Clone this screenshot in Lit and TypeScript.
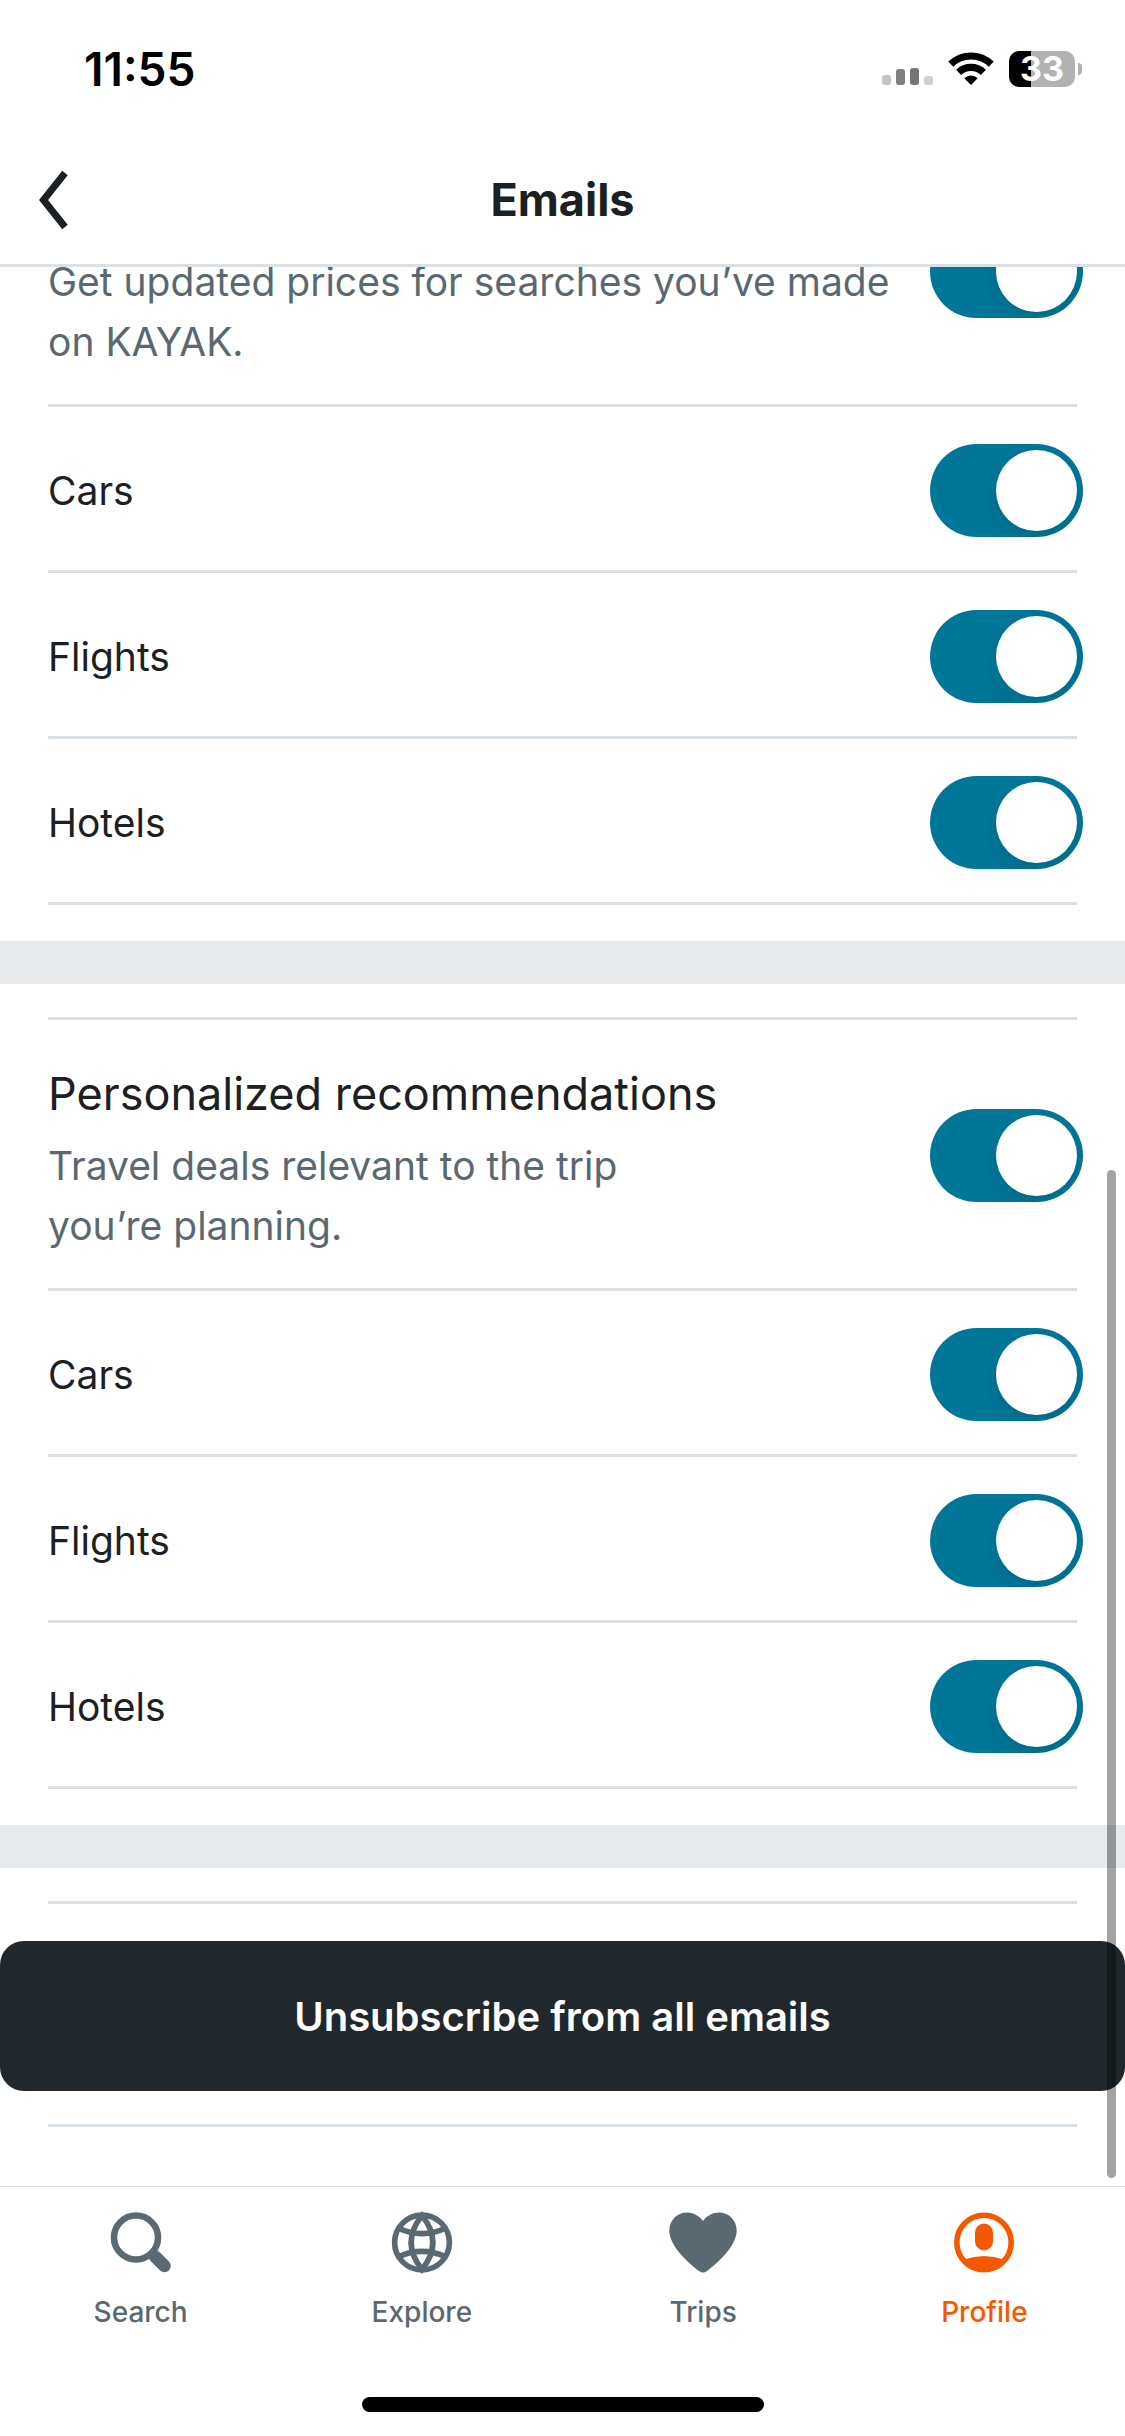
import { LitElement, html, css, svg, nothing } from "lit";
import { customElement, property } from "lit/decorators.js";

@customElement("toggle-row")
class ToggleRow extends LitElement {
  @property() heading = "";
  @property() detail = "";
  @property() label = "";

  static styles = css`
    :host {
      display: block;
      border-bottom: 3px solid #dae1e6;
    }
    .row {
      display: flex;
      align-items: center;
      justify-content: space-between;
      gap: 24px;
      box-sizing: border-box;
      min-height: 163px;
      padding-top: 4px;
      margin-right: -6px;
    }
    .tall {
      min-height: 268px;
      padding-top: 2px;
    }
    .text {
      flex: 1;
      min-width: 0;
    }
    .tall .text {
      align-self: flex-end;
      padding-bottom: 32px;
    }
    .heading {
      display: block;
      font-size: 45px;
      line-height: 60px;
      padding-bottom: 12px;
    }
    .detail {
      display: block;
      color: #5a6872;
      font-size: 39px;
      line-height: 60px;
      white-space: pre-line;
    }
    .name {
      font-size: 39px;
      line-height: 60px;
    }
    .switch {
      appearance: none;
      flex: none;
      display: grid;
      justify-items: start;
      align-items: center;
      box-sizing: border-box;
      width: 153px;
      height: 93px;
      margin: 0;
      padding: 6px;
      border-radius: 47px;
      background: #c3ccd2;
      overflow: hidden;
    }
    .switch:checked {
      justify-items: end;
      background: #007799;
    }
    .switch::before {
      content: "";
      width: 81px;
      height: 81px;
      border-radius: 50%;
      background: #fff;
      box-shadow: 0 9px 24px rgba(0, 0, 0, 0.12);
    }
  `;

  render() {
    const tall = this.detail !== "";
    return html`
      <div class="row ${tall ? "tall" : ""}">
        <label class="text" for="toggle">
          ${this.heading ? html`<span class="heading">${this.heading}</span>` : nothing}
          ${tall
            ? html`<span class="detail">${this.detail}</span>`
            : html`<span class="name">${this.label}</span>`}
        </label>
        <input class="switch" id="toggle" type="checkbox" role="switch" checked />
      </div>
    `;
  }
}

const searchIcon = svg`
  <circle cx="31" cy="31.500" r="22" fill="none" stroke="currentColor" stroke-width="6.500" />
  <path d="M50 50.500 L59.500 60" stroke="currentColor" stroke-width="12.500" stroke-linecap="round" />
`;
const exploreIcon = svg`
  <g fill="none" stroke="currentColor" stroke-width="5.600">
    <circle cx="36" cy="36.500" r="27.400" />
    <path d="M36 9.500 C21.500 27.500 21.500 45.500 36 63.500 C50.500 45.500 50.500 27.500 36 9.500 Z" />
    <path d="M12 22 C28 29.500 44 29.500 60 22 M12 51 C28 43.500 44 43.500 60 51" />
  </g>
`;
const tripsIcon = svg`
  <path fill="currentColor" d="M36 15 C32 9.500 26 6.500 20 6.500 C10 6.500 2.300 14.500 2.300 24.500 C2.300 38.500 18 54.500 32 65 Q36 68 40 65 C54 54.500 69.700 38.500 69.700 24.500 C69.700 14.500 62 6.500 52 6.500 C46 6.500 40 9.500 36 15 Z" />
`;
const profileIcon = svg`
  <circle cx="36" cy="36.500" r="27.200" fill="none" stroke="currentColor" stroke-width="5.600" />
  <rect x="27" y="17.500" width="18" height="27" rx="9" fill="currentColor" />
  <path d="M16 53.500 Q36 46.500 56 53.500 A27 27 0 0 1 16 53.500 Z" fill="currentColor" />
`;

const tabs = [
  { label: "Search", icon: searchIcon, active: false },
  { label: "Explore", icon: exploreIcon, active: false },
  { label: "Trips", icon: tripsIcon, active: false },
  { label: "Profile", icon: profileIcon, active: true },
];

const categories = ["Cars", "Flights", "Hotels"];

@customElement("app-root")
class AppRoot extends LitElement {
  static styles = css`
    :host {
      display: flex;
      flex-direction: column;
      min-height: 100vh;
      background: #fff;
      color: #1c2023;
      font-family: Inter, "Liberation Sans", sans-serif;
    }
    .status {
      display: flex;
      justify-content: space-between;
      align-items: center;
      height: 138px;
      padding: 0 43px 0 84px;
      color: #000;
    }
    .time {
      font-size: 46px;
      font-weight: 600;
    }
    .indicators {
      display: flex;
      align-items: center;
      gap: 15px;
    }
    .battery {
      display: flex;
      align-items: center;
      gap: 3px;
    }
    .charge {
      width: 66px;
      height: 36px;
      border-radius: 10px;
      background: linear-gradient(to right, #000 33%, #b2b2b2 33%);
      color: #fff;
      font-size: 34px;
      font-weight: 700;
      line-height: 36px;
      text-align: center;
    }
    .nub {
      width: 4px;
      height: 12px;
      border-radius: 0 6px 6px 0;
      background: #b2b2b2;
    }
    .header {
      display: grid;
      grid-template-columns: 1fr auto 1fr;
      align-items: center;
      height: 123px;
      padding: 0 36px 3px;
      border-bottom: 3px solid #dae1e6;
    }
    .back {
      justify-self: start;
      display: flex;
      padding: 0;
      border: 0;
      background: none;
      color: inherit;
    }
    .title {
      margin: 0;
      font-size: 45px;
      font-weight: 700;
      line-height: 60px;
    }
    .viewport {
      position: relative;
      flex: 1;
      overflow: hidden;
    }
    .section {
      padding: 33px 48px 36px;
      border-bottom: 43px solid #e6eaed;
    }
    .rows {
      border-top: 3px solid #dae1e6;
    }
    /* The list is scrolled part of the way through the first group. */
    .scrolled {
      margin-top: -167px;
    }
    .last {
      padding: 33px 0 59px;
    }
    .rule {
      height: 3px;
      margin: 0 48px;
      border: 0;
      background: #dae1e6;
    }
    .unsubscribe {
      display: block;
      width: 100%;
      height: 150px;
      margin: 37px 0 33px;
      border: 0;
      border-radius: 24px;
      background: #20282d;
      color: #fff;
      font-family: inherit;
      font-size: 40px;
      font-weight: 600;
    }
    .scrollbar {
      position: absolute;
      right: 9px;
      bottom: 8px;
      width: 9px;
      height: 1008px;
      border-radius: 5px;
      background: rgba(0, 0, 0, 0.36);
    }
    .tabs {
      display: grid;
      grid-template-columns: repeat(4, 1fr);
      border-top: 1px solid #dae1e6;
      padding-top: 19px;
    }
    .tab {
      display: flex;
      flex-direction: column;
      align-items: center;
      gap: 16px;
      color: #5a6872;
      font-size: 28px;
      font-weight: 500;
      line-height: 36px;
      text-decoration: none;
    }
    .active {
      color: #f55900;
    }
    .home {
      width: 402px;
      height: 15px;
      margin: 67px auto 24px;
      border-radius: 8px;
      background: #000;
    }
    svg {
      display: block;
    }
  `;

  render() {
    return html`
      <div class="status">
        <span class="time">11:55</span>
        <div class="indicators">
          <svg width="51" height="36" viewBox="0 0 51 36" aria-hidden="true">
            <rect x="0" y="24" width="9" height="10" rx="3" fill="#c4c4c4" />
            <rect x="14" y="18" width="9" height="16" rx="3" fill="#808080" />
            <rect x="28" y="17" width="9" height="17" rx="3" fill="#757575" />
            <rect x="42" y="25" width="9" height="9" rx="3" fill="#d0d0d0" />
          </svg>
          <svg width="46" height="36" viewBox="0 0 46 36" aria-hidden="true">
            <g fill="none" stroke="#000" stroke-width="7.200">
              <path d="M2.800 13.200 A29 29 0 0 1 43.200 13.200" />
              <path d="M10.600 21.400 A18 18 0 0 1 35.400 21.400" />
            </g>
            <path d="M23 34 L16.300 27.300 A9.600 9.600 0 0 1 29.700 27.300 Z" />
          </svg>
          <div class="battery">
            <div class="charge">33</div>
            <div class="nub"></div>
          </div>
        </div>
      </div>
      <header class="header">
        <button class="back" aria-label="Back">
          <svg width="34" height="60" viewBox="0 0 34 60" aria-hidden="true">
            <path d="M29 3 L7.500 30 L29 57" fill="none" stroke="currentColor" stroke-width="7" />
          </svg>
        </button>
        <h1 class="title">Emails</h1>
      </header>
      <main class="viewport">
        <section class="section scrolled">
          <div class="rows">
            <toggle-row detail="Get updated prices for searches you’ve made on KAYAK."></toggle-row>
            ${categories.map((name) => html`<toggle-row label=${name}></toggle-row>`)}
          </div>
        </section>
        <section class="section">
          <div class="rows">
            <toggle-row
              heading="Personalized recommendations"
              detail=${"Travel deals relevant to the trip\nyou’re planning."}
            ></toggle-row>
            ${categories.map((name) => html`<toggle-row label=${name}></toggle-row>`)}
          </div>
        </section>
        <section class="last">
          <hr class="rule" />
          <button class="unsubscribe">Unsubscribe from all emails</button>
          <hr class="rule" />
        </section>
        <div class="scrollbar"></div>
      </main>
      <nav class="tabs">
        ${tabs.map(
          (tab) => html`
            <a class="tab ${tab.active ? "active" : ""}" href="#${tab.label.toLowerCase()}">
              <svg width="72" height="72" viewBox="0 0 72 72" aria-hidden="true">${tab.icon}</svg>
              <span>${tab.label}</span>
            </a>
          `,
        )}
      </nav>
      <div class="home"></div>
    `;
  }
}
